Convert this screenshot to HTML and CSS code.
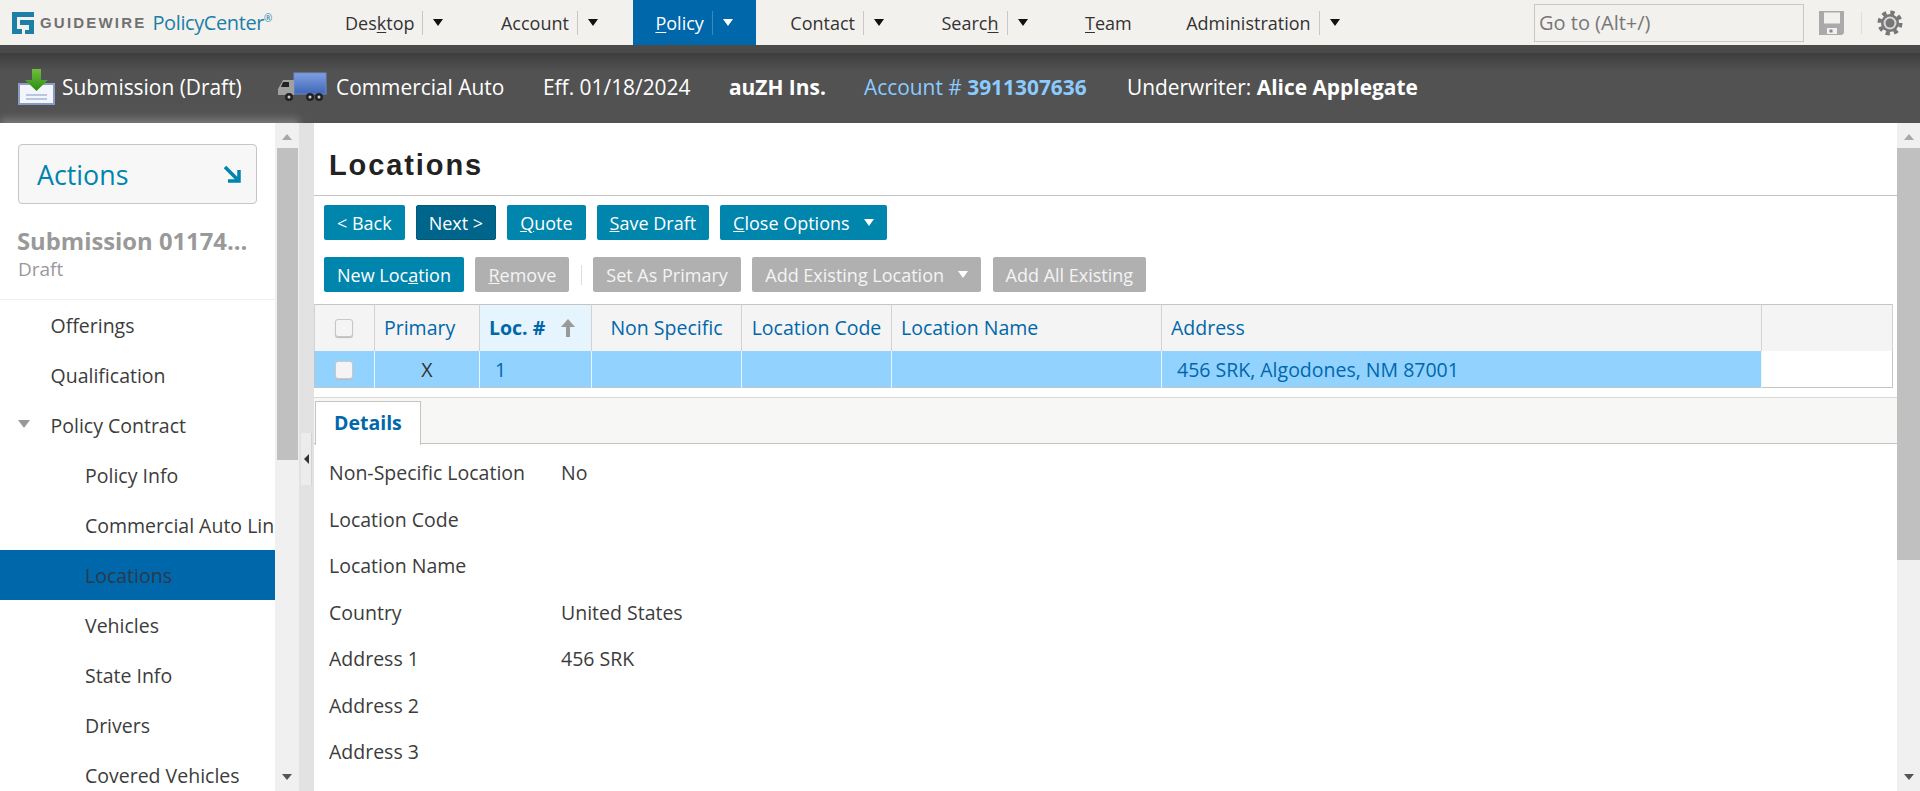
FILE: index.html
```html
<!DOCTYPE html>
<html lang="en">
<head>
    <meta charset="UTF-8">
    <title>Guidewire PolicyCenter</title>
    <link rel="stylesheet" href="styles.css">
</head>
<body>
    <header class="topbar">
        <div class="logo">
            <svg class="logo-mark" width="22" height="22" viewBox="0 0 22 22">
                <path fill="#1b7fa6" d="M0 0h22v5H5v12h5v5H0z"/>
                <path fill="#1b7fa6" d="M8 8h14v14h-9v-4h4v-5H8z"/>
            </svg>
            <span class="logo-gw">GUIDEWIRE</span>
            <span class="logo-pc">PolicyCenter<sup>®</sup></span>
        </div>
        <nav class="tabs">
            <div class="tab"><span>Des<u>k</u>top</span><i class="sep"></i><i class="caret"></i></div>
            <div class="tab"><span>Account</span><i class="sep"></i><i class="caret"></i></div>
            <div class="tab active"><span><u>P</u>olicy</span><i class="sep"></i><i class="caret"></i></div>
            <div class="tab"><span>Contact</span><i class="sep"></i><i class="caret"></i></div>
            <div class="tab"><span>Searc<u>h</u></span><i class="sep"></i><i class="caret"></i></div>
            <div class="tab tab-plain"><span><u>T</u>eam</span></div>
            <div class="tab"><span>Administration</span><i class="sep"></i><i class="caret"></i></div>
        </nav>
        <div class="tools">
            <div class="goto">Go to (Alt+/)</div>
            <svg width="25" height="24" viewBox="0 0 25 24">
                <path fill="#aaa" d="M0 0h25v22l-2 2H0z"/>
                <rect x="5" y="1.500" width="16" height="11" fill="#f3f1ee"/>
                <rect x="8" y="17" width="10" height="6" fill="#f3f1ee"/>
                <rect x="10.500" y="18.500" width="3" height="3" fill="#888"/>
            </svg>
            <i class="tool-sep"></i>
            <svg width="26" height="26" viewBox="0 0 26 26">
                <circle cx="13" cy="13" r="9" fill="#777"/>
                <circle cx="13" cy="13" r="10.500" fill="none" stroke="#777" stroke-width="4" stroke-dasharray="4.200 4.050"/>
                <circle cx="13" cy="13" r="6.500" fill="#d8d8d6"/>
                <circle cx="13" cy="13" r="4.500" fill="#777"/>
            </svg>
        </div>
    </header>

    <section class="infobar">
        <div class="info info-sub">
            <svg width="38" height="36" viewBox="0 0 38 36">
                <defs>
                    <linearGradient id="green" x1="0" y1="0" x2="0" y2="1">
                        <stop offset="0" stop-color="#6fbf3a"/>
                        <stop offset="1" stop-color="#2c8c14"/>
                    </linearGradient>
                </defs>
                <rect x="1" y="15" width="35" height="20" fill="#f2f5fb" stroke="#8a9cc4" stroke-width="2"/>
                <path d="M8 26h21M8 30h21" stroke="#a8b6d6" stroke-width="1.500"/>
                <path fill="url(#green)" d="M14 0h9v11h7L18.500 22 7 11h7z"/>
            </svg>
            <span>Submission (Draft)</span>
        </div>
        <div class="info info-lob">
            <svg width="50" height="30" viewBox="0 0 50 30">
                <defs>
                    <linearGradient id="box" x1="0" y1="0" x2="0" y2="1">
                        <stop offset="0" stop-color="#7f9fe0"/>
                        <stop offset="1" stop-color="#3f66b8"/>
                    </linearGradient>
                </defs>
                <rect x="17" y="1" width="32" height="21" fill="url(#box)" stroke="#6f8ccc"/>
                <path fill="#a0a0a0" d="M1 17l5-9h11v15H1z"/>
                <path fill="#222" d="M6 10h6v5H4z"/>
                <circle cx="12" cy="25" r="4" fill="#222"/><circle cx="12" cy="25" r="1.500" fill="#ccc"/>
                <circle cx="33" cy="25" r="4" fill="#222"/><circle cx="33" cy="25" r="1.500" fill="#ccc"/>
                <circle cx="42" cy="25" r="4" fill="#222"/><circle cx="42" cy="25" r="1.500" fill="#ccc"/>
            </svg>
            <span>Commercial Auto</span>
        </div>
        <div class="info info-eff">Eff. 01/18/2024</div>
        <div class="info info-ins"><b>auZH Ins.</b></div>
        <div class="info info-acct">Account # <b>3911307636</b></div>
        <div class="info info-uw">Underwriter: <b>Alice Applegate</b></div>
    </section>

    <div class="workspace">
        <aside class="sidebar">
            <div class="side-body">
                <div class="actions">
                    <span>Actions</span>
                    <svg width="18" height="18" viewBox="0 0 18 18">
                        <path d="M2 2l12 12M16 5v11H5" fill="none" stroke="#0085ac" stroke-width="3.500"/>
                    </svg>
                </div>
                <div class="job">
                    <div class="job-title">Submission 01174...</div>
                    <div class="job-state">Draft</div>
                </div>
                <ul class="side-nav">
                    <li class="lvl1">Offerings</li>
                    <li class="lvl1">Qualification</li>
                    <li class="lvl1 open">Policy Contract</li>
                    <li class="lvl2">Policy Info</li>
                    <li class="lvl2">Commercial Auto Line</li>
                    <li class="lvl2 current">Locations</li>
                    <li class="lvl2">Vehicles</li>
                    <li class="lvl2">State Info</li>
                    <li class="lvl2">Drivers</li>
                    <li class="lvl2">Covered Vehicles</li>
                </ul>
            </div>
            <div class="scrollbar side-scroll">
                <i class="arrow-up"></i>
                <div class="thumb"></div>
                <i class="arrow-down"></i>
            </div>
        </aside>

        <div class="splitter"><div class="handle"></div></div>

        <main class="content">
            <div class="page">
                <h1>Locations</h1>
                <div class="btn-row row-top">
                    <button class="btn">&lt; Back</button>
                    <button class="btn dark">Next &gt;</button>
                    <button class="btn"><u>Q</u>uote</button>
                    <button class="btn"><u>S</u>ave Draft</button>
                    <button class="btn wide"><u>C</u>lose Options<i class="btn-caret"></i></button>
                </div>
                <div class="btn-row row-lower">
                    <button class="btn">New Loc<u>a</u>tion</button>
                    <button class="btn off"><u>R</u>emove</button>
                    <i class="btn-sep"></i>
                    <button class="btn off">Set As Primary</button>
                    <button class="btn off wide">Add Existing Location<i class="btn-caret"></i></button>
                    <button class="btn off">Add All Existing</button>
                </div>
                <table class="grid">
                    <colgroup>
                        <col class="c-check"><col class="c-primary"><col class="c-loc"><col class="c-non">
                        <col class="c-code"><col class="c-name"><col class="c-addr"><col>
                    </colgroup>
                    <thead>
                        <tr>
                            <th><i class="check"></i></th>
                            <th>Primary</th>
                            <th class="sorted">Loc. #<svg width="16" height="18" viewBox="0 0 16 18"><path fill="#999" d="M8 0l7 8h-5v10H6V8H1z"/></svg></th>
                            <th class="center">Non Specific</th>
                            <th class="center">Location Code</th>
                            <th>Location Name</th>
                            <th>Address</th>
                            <th></th>
                        </tr>
                    </thead>
                    <tbody>
                        <tr>
                            <td class="sel"><i class="check"></i></td>
                            <td class="sel center plain">X</td>
                            <td class="sel pad">1</td>
                            <td class="sel"></td>
                            <td class="sel"></td>
                            <td class="sel"></td>
                            <td class="sel pad">456 SRK, Algodones, NM 87001</td>
                            <td></td>
                        </tr>
                    </tbody>
                </table>
                <div class="tabstrip">
                    <div class="detail-tab">Details</div>
                </div>
                <dl class="fields">
                    <div><dt>Non-Specific Location</dt><dd>No</dd></div>
                    <div><dt>Location Code</dt><dd></dd></div>
                    <div><dt>Location Name</dt><dd></dd></div>
                    <div><dt>Country</dt><dd>United States</dd></div>
                    <div><dt>Address 1</dt><dd>456 SRK</dd></div>
                    <div><dt>Address 2</dt><dd></dd></div>
                    <div><dt>Address 3</dt><dd></dd></div>
                </dl>
            </div>
            <div class="scrollbar main-scroll">
                <i class="arrow-up"></i>
                <div class="thumb"></div>
                <i class="arrow-down"></i>
            </div>
        </main>
    </div>
</body>
</html>
```

FILE: styles.css
```css
* {
    box-sizing: border-box;
}

:root {
    --blue: #0067ab;
    --teal: #0085ac;
    --text: #3c3c3c;
    --line: #c4c4c4;
    --bar: #f3f1ee;
}

html, body {
    height: 100%;
}

body {
    margin: 0;
    height: 791px;
    overflow: hidden;
    display: flex;
    flex-direction: column;
    font-family: "Open Sans", "Liberation Sans", sans-serif;
    font-size: 19.500px;
    color: var(--text);
    background: #fff;
}

i {
    display: block;
}

/* top bar */
.topbar {
    height: 45px;
    flex: none;
    display: flex;
    background: var(--bar);
    color: #333;
}

.logo {
    width: 323px;
    flex: none;
    display: flex;
    align-items: center;
    padding-left: 12px;
}

.logo-mark {
    margin-right: 6px;
    flex: none;
}

.logo-gw {
    font-family: "Liberation Sans", sans-serif;
    font-weight: bold;
    font-size: 15px;
    letter-spacing: 2.200px;
    color: #707070;
    margin-right: 6px;
}

.logo-pc {
    font-size: 20px;
    color: #1b7fa6;
    letter-spacing: -0.400px;
}

.logo-pc sup {
    font-size: 10px;
    line-height: 0;
    vertical-align: 8px;
}

.tabs {
    display: flex;
    gap: 12px;
    font-size: 18px;
}

.tab {
    display: flex;
    align-items: center;
    padding: 0 23.500px 0 22px;
}

.tab-plain {
    padding-right: 20.500px;
}

.tab.active {
    background: var(--blue);
    color: #fff;
}

.tab u {
    text-underline-offset: 2px;
}

.sep {
    width: 1px;
    height: 24px;
    margin: 0 10px 0 8px;
    background: #c8c8c8;
}

.active .sep {
    background: #3f86bb;
}

.caret {
    width: 0;
    height: 0;
    border-left: 5.500px solid transparent;
    border-right: 5.500px solid transparent;
    border-top: 7px solid #111;
}

.active .caret {
    border-top-color: #fff;
}

.tools {
    margin-left: auto;
    display: flex;
    align-items: center;
    padding-right: 17px;
}

.goto {
    width: 270px;
    height: 38px;
    margin-right: 15px;
    border: 1px solid #c9c9c4;
    padding-left: 4px;
    line-height: 36px;
    font-size: 20px;
    color: #777;
}

.tool-sep {
    width: 1px;
    height: 22px;
    margin: 0 15px 0 17px;
    background: #e0dedb;
}

/* dark info bar */
.infobar {
    height: 78px;
    flex: none;
    display: flex;
    align-items: center;
    color: #fff;
    font-size: 20.900px;
    background: linear-gradient(#4a4a4a 0, #4a4a4a 8px, #3d3d3d 8px, #525252 26px);
    padding-top: 6px;
}

.infobar b {
    font-weight: 700;
}

.info {
    display: flex;
    align-items: center;
    white-space: pre;
}

.info-sub {
    gap: 6px;
    width: 277px;
    padding-left: 18px;
}

.info-lob {
    gap: 9px;
    width: 266px;
}

.info-eff {
    width: 186px;
}

.info-ins {
    width: 135px;
}

.info-acct {
    width: 263px;
    color: #8ccbff;
}

/* body area */
.workspace {
    flex: 1;
    min-height: 0;
    display: flex;
}

.sidebar {
    width: 299px;
    flex: none;
    display: flex;
    box-shadow: 0 -4px 8px rgba(255, 255, 255, 0.25);
}

.side-body {
    width: 275px;
    flex: none;
    overflow: hidden;
}

.actions {
    margin: 21px 18px 0;
    height: 60px;
    display: flex;
    align-items: center;
    justify-content: space-between;
    padding: 0 15px 0 18px;
    background: #f7f7f7;
    border: 1px solid #c6c6c6;
    border-radius: 4px;
    font-size: 26.800px;
    color: var(--teal);
}

.job {
    height: 96px;
    padding: 22px 0 0 17px;
    border-bottom: 1px solid #eee;
}

.job-title {
    font-size: 23.800px;
    font-weight: 700;
    line-height: 31px;
    color: #999;
    white-space: nowrap;
}

.job-state {
    font-size: 19px;
    line-height: 24px;
    color: #999;
    padding-left: 1px;
}

.side-nav {
    list-style: none;
    margin: 0;
    padding: 0;
}

.side-nav li {
    height: 50px;
    line-height: 51px;
    white-space: nowrap;
    position: relative;
}

.lvl1 {
    padding-left: 50.500px;
}

.lvl2 {
    padding-left: 85px;
}

.side-nav .current {
    background: var(--blue);
    color: #2b3a4a;
}

.open::before {
    content: "";
    position: absolute;
    left: 18px;
    top: 20px;
    border-left: 6.500px solid transparent;
    border-right: 6.500px solid transparent;
    border-top: 8px solid #999;
}

.scrollbar {
    flex: none;
    display: flex;
    flex-direction: column;
    align-items: center;
    background: #f0f0f0;
    padding-top: 11px;
}

.arrow-up {
    flex: none;
    border-left: 5.500px solid transparent;
    border-right: 5.500px solid transparent;
    border-bottom: 6px solid #a8a8a8;
}

.arrow-down {
    flex: none;
    margin-top: auto;
    margin-bottom: 11px;
    border-left: 5.500px solid transparent;
    border-right: 5.500px solid transparent;
    border-top: 6px solid #555;
}

.thumb {
    flex: none;
    width: 21px;
    margin-top: 8px;
    background: #c0c0c0;
}

.side-scroll {
    width: 24px;
}

.side-scroll .thumb {
    height: 312px;
}

.main-scroll {
    width: 23px;
}

.main-scroll .thumb {
    width: 23px;
    height: 412px;
}

.splitter {
    width: 15px;
    flex: none;
    background: #e2e2e2;
    padding-top: 310px;
}

.handle {
    position: relative;
    width: 11px;
    height: 52px;
    margin-left: 2px;
    background: #ececec;
    border-right: 1px solid #d4d4d4;
}

.handle::after {
    content: "";
    position: absolute;
    left: 3px;
    top: 21px;
    border-top: 5px solid transparent;
    border-bottom: 5px solid transparent;
    border-right: 5px solid #333;
}

.content {
    flex: 1;
    min-width: 0;
    display: flex;
}

.page {
    flex: 1;
    min-width: 0;
    overflow: hidden;
}

h1 {
    margin: 0;
    height: 73px;
    padding: 0 0 0 15px;
    font-family: "Liberation Sans", sans-serif;
    font-size: 29px;
    font-weight: bold;
    letter-spacing: 1.900px;
    line-height: 84px;
    color: #222;
    border-bottom: 1px solid var(--line);
}

/* buttons */
.btn-row {
    display: flex;
    align-items: center;
    padding-left: 10px;
}

.row-top {
    gap: 11px;
    padding-top: 9px;
}

.row-lower {
    gap: 11.500px;
    padding-top: 17px;
}

.btn {
    height: 35px;
    padding: 0 13px;
    border: 0;
    border-radius: 2px;
    font: inherit;
    font-size: 18px;
    color: #fff;
    background: var(--teal);
    white-space: nowrap;
    display: flex;
    align-items: center;
}

.btn.dark {
    padding: 0 12px;
    background: #00658a;
    border: 1px solid #005a7a;
}

.btn.off {
    background: #b0b0b0;
    color: #f4f4f4;
}

.btn-caret {
    margin-left: 14px;
    border-left: 5.500px solid transparent;
    border-right: 5.500px solid transparent;
    border-top: 7px solid #fff;
}

.btn-sep {
    width: 1px;
    height: 20px;
    background: #ddd;
}

/* grid */
.grid {
    width: 1579px;
    margin-top: 12px;
    border-collapse: collapse;
    table-layout: fixed;
    border: 1px solid var(--line);
    color: var(--blue);
}

.c-check { width: 60px; }
.c-primary { width: 105px; }
.c-loc { width: 112px; }
.c-non { width: 150px; }
.c-code { width: 150px; }
.c-name { width: 270px; }
.c-addr { width: 600px; }

.grid th {
    height: 46px;
    padding: 0 9px;
    background: #f4f4f4;
    border: 1px solid #d2d2d2;
    border-top: 0;
    border-bottom: 0;
    font-weight: 400;
    font-size: 19.500px;
    text-align: left;
    white-space: nowrap;
}

.grid .sorted {
    background: #e6f4fd;
    font-weight: 700;
}

.sorted svg {
    margin-left: 15px;
    vertical-align: -2px;
}

.grid .center {
    text-align: center;
}

.grid td {
    height: 37px;
    padding: 2px 9px 0;
    border-right: 1px solid #e6f4fd;
}

.grid td:last-child {
    border-right: 0;
}

.grid .sel {
    background: #92d2ff;
}

.grid .pad {
    padding-left: 15px;
}

.grid .plain {
    color: #333;
}

.check {
    width: 18px;
    height: 18px;
    margin-left: 11px;
    background: #f4f4f4;
    border: 1px solid #c8c8c8;
    border-radius: 3px;
    box-shadow: 0 1px 1px #bbb;
}

/* details */
.tabstrip {
    height: 47px;
    margin-top: 9px;
    padding: 3px 0 0 1px;
    background: #f7f7f5;
    border-top: 1px solid #d8d8d8;
    border-bottom: 1px solid var(--line);
}

.detail-tab {
    width: 106px;
    height: 44px;
    padding-left: 18px;
    line-height: 41px;
    font-weight: 700;
    color: var(--blue);
    background: #fff;
    border: 1px solid var(--line);
    border-bottom: 0;
}

.fields {
    margin: 5.500px 0 0;
}

.fields div {
    display: flex;
    height: 46.500px;
    align-items: center;
    padding-left: 15px;
}

.fields dt {
    width: 232px;
}

.fields dd {
    margin: 0;
}
```
